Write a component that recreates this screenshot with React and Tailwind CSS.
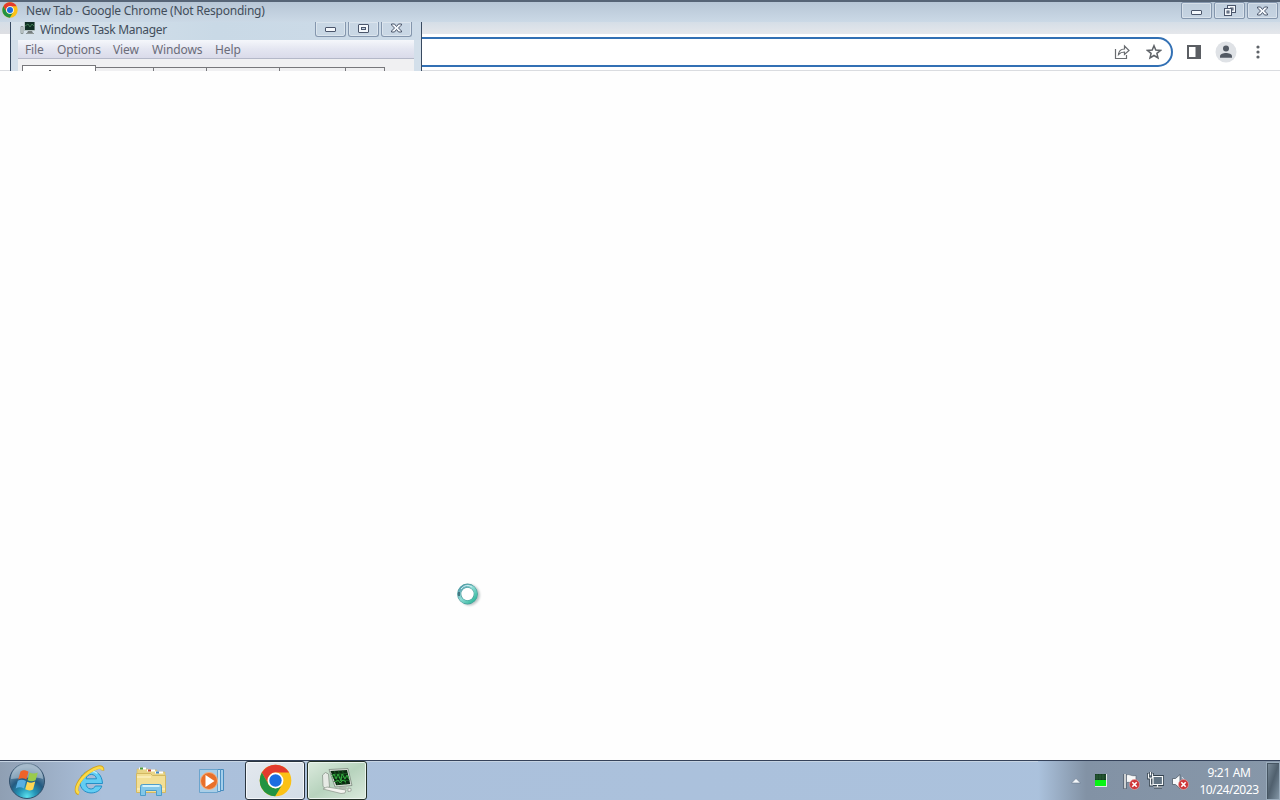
import clsx from "clsx";

const menuItems = [
  { label: "File", width: "w-[32px]" },
  { label: "Options", width: "w-[56px]" },
  { label: "View", width: "w-[39px]" },
  { label: "Windows", width: "w-[63px]" },
  { label: "Help", width: "w-[40px]" },
];

const tabs = ["w-[58px]", "w-[53px]", "w-[73px]", "w-[66px]", "w-[39px]"];

function ChromeLogo({ className }) {
  return (
    <svg viewBox="0 0 48 48" className={className}>
      <circle cx="24" cy="24" r="23" fill="#fbc116" />
      <path d="M4.1 12.5A23 23 0 0 1 43.9 12.5H24A11.5 11.5 0 0 0 14 29.7Z" fill="#e33b2e" />
      <path d="M4.1 12.5A23 23 0 0 0 23.5 47L33.9 29.7A11.5 11.5 0 0 1 14 29.7Z" fill="#229342" />
      <circle cx="24" cy="24" r="11.5" fill="#fff" />
      <circle cx="24" cy="24" r="9" fill="#1b6de0" />
    </svg>
  );
}

function CaptionGlyph({ type }) {
  return (
    <svg viewBox="0 0 14 12" className="h-3 w-3.5" fill="none" stroke="#4b566b">
      {type === "minimize" && <rect x="1.5" y="5.5" width="10" height="4" rx="0.5" fill="#f4f8fc" />}
      {type === "maximize" && (
        <>
          <rect x="1.5" y="2.5" width="10" height="8" rx="0.5" fill="#f4f8fc" />
          <rect x="4.5" y="5.5" width="4" height="2" fill="#c3d0e0" />
        </>
      )}
      {type === "restore" && (
        <>
          <rect x="4.5" y="0.5" width="8" height="7" fill="#f4f8fc" />
          <rect x="7.5" y="3" width="2.5" height="2" fill="#c3d0e0" />
          <rect x="1.5" y="3.5" width="7" height="7" fill="#f4f8fc" />
          <rect x="4" y="6" width="2" height="2" fill="#c3d0e0" />
        </>
      )}
      {type === "close" && (
        <path
          d="M1.5 2h3L6.5 4.5l2-2.5h3v1L8.5 6l3 3v1h-3l-2-2.5-2 2.5h-3v-1l3-3-3-3Z"
          fill="#f4f8fc"
        />
      )}
    </svg>
  );
}

function CaptionButton({ type, className }) {
  return (
    <div
      className={clsx(
        "flex justify-center border border-[#8496ad] bg-[#c5d3e2]/50 shadow-[inset_0_0_0_1px_rgba(255,255,255,0.35)]",
        className
      )}
    >
      <CaptionGlyph type={type} />
    </div>
  );
}

function TitleBar() {
  return (
    <div className="flex h-[22px] border-t-2 border-[#566476] bg-linear-to-b from-[#b7c6d6] to-[#cbd9e6]">
      <ChromeLogo className="ml-[2px] h-4 w-4" />
      <span className="ml-2 flex-1 text-[12px] leading-[18px] tracking-[-0.24px] text-[#424d5a]">
        New Tab - Google Chrome (Not Responding)
      </span>
      <div className="flex gap-[2px] pr-[2px]">
        <CaptionButton type="minimize" className="h-[17px] w-[31px] items-center rounded-[2px]" />
        <CaptionButton type="restore" className="h-[17px] w-[31px] items-center rounded-[2px]" />
        <CaptionButton type="close" className="h-[17px] w-[31px] items-center rounded-[2px]" />
      </div>
    </div>
  );
}

function MonitorIcon() {
  return (
    <svg viewBox="0 0 16 14" className="h-3.5 w-4">
      <path d="M1 4.5h2v7H1z" fill="#dfe6e8" stroke="#8d9898" />
      <path d="M4 0h11v9H4z" fill="#b7c4c4" />
      <path d="M5 0h9.500v8H5z" fill="#102e24" />
      <path d="m5 4 3-2 2 3 2-3 2 2" fill="none" stroke="#3d7850" />
      <path d="M8 9h4l1 2H7z" fill="#777f80" />
      <path d="M6 11h8v1H6z" fill="#8f9898" />
    </svg>
  );
}

function TaskManager() {
  return (
    <div className="flex h-[49px] w-[412px] flex-col overflow-hidden border-r border-l border-[#384a61] bg-[#d3dfea]">
      <div className="flex h-[18px] shrink-0 bg-linear-to-r from-[#d8e3ec] via-[#c9d9e6] to-[#cddbe8]">
        <span className="ml-[9px]">
          <MonitorIcon />
        </span>
        <span className="ml-1 flex-1 text-[12px] leading-[16px] tracking-[-0.3px] text-[#424e5c]">
          Windows Task Manager
        </span>
        <div className="flex gap-[2px] pr-[9px]">
          <CaptionButton type="minimize" className="h-[15px] w-[31px] rounded-b-[3px] border-t-0" />
          <CaptionButton type="maximize" className="h-[15px] w-[31px] rounded-b-[3px] border-t-0" />
          <CaptionButton type="close" className="h-[15px] w-[31px] rounded-b-[3px] border-t-0" />
        </div>
      </div>
      <div className="mx-[7px] flex h-[19px] shrink-0 border-b border-[#b4b8c8] bg-linear-to-b from-[#f5f7fb] via-[#e4e6f1] to-[#dadbea] pl-[7px] text-[12px] leading-[19px] tracking-[-0.12px] text-[#6b6c79]">
        {menuItems.map((item) => (
          <span key={item.label} className={item.width}>
            {item.label}
          </span>
        ))}
      </div>
      <div className="mx-[7px] flex h-[12px] items-end bg-[#f0f0f2] pl-1">
        <div className="flex h-[6px] w-[74px] items-end border border-b-0 border-[#77777b] bg-white pl-[26px]">
          <span className="h-px w-[2px] bg-[#555]" />
        </div>
        {tabs.map((width, index) => (
          <div key={index} className={clsx("h-[4px] border-t border-r border-[#77777b] bg-[#f0f0f2]", width)} />
        ))}
      </div>
    </div>
  );
}

function BrowserToolbar() {
  return (
    <div className="flex h-[49px] flex-1 flex-col border-b border-[#dadce0] bg-white">
      <div className="h-[12px] shrink-0 bg-linear-to-b from-[#d5dee7] to-[#e5e7eb]" />
      <div className="flex h-[36px] items-center">
        <div className="flex h-[30px] w-[751px] items-center justify-end gap-4 rounded-r-full border-2 border-l-0 border-[#3270b4] bg-white pr-[9px]">
          <svg viewBox="0 0 16 16" className="h-4 w-4" fill="none" stroke="#696c70" strokeWidth="1.2">
            <path d="M1.500 5v9.500h11V11" />
            <path d="M4.500 10.500c.4-3.700 2.500-5.400 6-5.500V2l4.500 4.500-4.500 4V8C7.500 8 6 8.800 4.500 10.500Z" />
          </svg>
          <svg viewBox="0 0 16 16" className="h-4 w-4" fill="none" stroke="#5f6368" strokeWidth="1.500">
            <path d="m8 1.700 1.800 4.300 4.700.4-3.600 3 1.100 4.600L8 11.500 4 14l1.100-4.600-3.600-3L6.200 6Z" />
          </svg>
        </div>
        <svg viewBox="0 0 14 14" className="ml-[14px] h-3.5 w-3.5">
          <path fillRule="evenodd" d="M0 0h14v14H0zM2 2v10h6.500V2z" fill="#5b5e63" />
        </svg>
        <svg viewBox="0 0 22 22" className="ml-[14px] h-[22px] w-[22px]">
          <circle cx="11" cy="11" r="10.5" fill="#dfe2e6" />
          <circle cx="11" cy="7.6" r="3" fill="#535a64" />
          <path d="M5 16.7v-1.4c0-2.1 3.4-3.2 6-3.2s6 1.1 6 3.2v1.4z" fill="#535a64" />
        </svg>
        <svg viewBox="0 0 4 14" className="ml-[19px] h-3.5 w-1" fill="#5f6368">
          <circle cx="2" cy="2" r="1.6" />
          <circle cx="2" cy="7" r="1.6" />
          <circle cx="2" cy="12" r="1.6" />
        </svg>
      </div>
    </div>
  );
}

function StartOrb() {
  return (
    <svg viewBox="0 0 38 38" className="h-[38px] w-[38px]">
      <defs>
        <radialGradient id="orb" cx="50%" cy="95%" r="85%">
          <stop offset="0" stopColor="#5ce2ee" />
          <stop offset="0.3" stopColor="#2596b8" />
          <stop offset="0.6" stopColor="#245a80" />
          <stop offset="1" stopColor="#7f9ab2" />
        </radialGradient>
      </defs>
      <circle cx="19" cy="19" r="17.5" fill="url(#orb)" stroke="#31506c" />
      <path d="M3 17a16 16 0 0 1 32 0c-8-3-20-1-32 0Z" fill="#d4e2ec" opacity=".45" />
      <path d="M12.500 9.500c3-2 5-1.400 8 .2L18.400 17.600c-3-1.800-5.500-1.600-8.200-.2Z" fill="#ee6328" />
      <path d="M21.600 10.500c2.700 1.400 5.400 1.200 8.200-.1l-2.200 7.800c-2.500 1.400-5.200 1.500-8 0Z" fill="#9acb4c" />
      <path d="M9.800 18.800c2.800-1.600 5.300-1.400 8.200.1l-2 7.700c-2.800-1.700-5.500-1.700-8.300-.1Z" fill="#5aafe1" />
      <path d="M19.200 19.700c2.700 1.400 5.300 1.400 8-.1l-2.100 7.800c-2.700 1.500-5.200 1.300-7.900-.1Z" fill="#ffd653" />
    </svg>
  );
}

function ExplorerLogo() {
  return (
    <svg viewBox="0 0 34 34" className="h-[34px] w-[34px]" fill="none">
      <path
        d="M29.500 19.500H13c.2 6.500 7.600 7 9.300 2.500h6.500C26 32 7.500 31.500 7 18.500 6.500 4 28.800 1.500 29.500 19.500ZM13 14.800h10.500c-.8-5.800-9.500-5.800-10.500 0Z"
        fill="#62cdf3"
        stroke="#258fc6"
      />
      <path d="M10 11c3.500-4 10-5 14.500-1.500" stroke="#b7effc" strokeWidth="1.5" />
      <path d="M6 29.500C-.5 27 6.500 14.500 15.500 8 22 3.300 30.500.5 29.500 6.500" stroke="#d4a51e" strokeWidth="3.6" />
      <path d="M6 29C0 26.500 6.800 15 16 8.300 22 4 30 1.300 29.200 6" stroke="#fbdb48" strokeWidth="2.5" />
    </svg>
  );
}

function FolderIcon() {
  return (
    <svg viewBox="0 0 34 32" className="h-8 w-[34px]">
      <path d="M3 4h11l1 1h8v2h8v4H3z" fill="#e9d586" stroke="#d3b861" strokeWidth=".6" />
      <path d="M5 2.500h7v2H5z" fill="#fff" />
      <path d="M6 2.500h3v2H6z" fill="#4d9a3c" />
      <path d="M13 4.500h8v2h-8z" fill="#fff" />
      <path d="M14 4.500h3v2h-3z" fill="#c0432f" />
      <path d="M21 6.500h8v2h-8z" fill="#fff" />
      <path d="M22 6.500h3v2h-3z" fill="#3f87c5" />
      <path d="M2.500 8.500h14l2 2h13v17h-29z" fill="#f2df96" stroke="#d3b861" />
      <path d="M3 12h14M3 24h28" stroke="#fbf0be" strokeWidth="1.5" />
      <path
        d="M6.500 30.500v-9q0-2 2-2h17q2 0 2 2v9h-5v-5h-11v5z"
        fill="#83c7e8"
        stroke="#4d9dca"
      />
      <path d="M8.500 21h17" stroke="#d3f2fa" strokeWidth="2" />
    </svg>
  );
}

function MediaIcon() {
  return (
    <svg viewBox="0 0 28 28" className="h-7 w-7">
      <path d="M8.500 2.500h17v21h-17z" fill="#a5cfeb" stroke="#478cbe" />
      <path d="M5.500 2.500h17v22h-17z" fill="#c6e2f2" stroke="#4d91c3" />
      <path d="M1.500 2.500h18v23h-18z" fill="#a9cee7" stroke="#6ba4cd" />
      <circle cx="11" cy="14" r="8.5" fill="#e8702a" stroke="#f3b486" />
      <path d="m7.500 8 9 6-9 6z" fill="#fff" />
    </svg>
  );
}

function TaskManagerIcon() {
  return (
    <svg viewBox="0 0 34 28" className="h-7 w-[34px]">
      <path d="m2.500 8 3-2.500 3 1.500 1 13-4 1.500-2.500-2z" fill="#e6eae5" stroke="#89978a" strokeWidth=".8" />
      <path d="m9 2.500 19-1 4 17-17 1.500z" fill="#d9dfd7" stroke="#7f8b80" strokeWidth=".8" />
      <path d="m10.500 4 16.500-1 3.200 14-14 1.300z" fill="#0b2a10" />
      <path d="m11.300 7.500 16.400-1M12.400 11l16.200-1M13.500 14.500l16-1.200M14.500 4l3.500 14M18.500 3.800 22 17.900M22.500 3.500 26 17.400" stroke="#1c6425" strokeWidth=".8" />
      <path d="m12 10 2-3 2 5 2-5 3 7 1-7 3 5 2-4 2 4M15 15l3-2 2 3 3-3 3 2" fill="none" stroke="#35ad40" />
      <path d="m19 20 7-.5 1 2.500-8 .5z" fill="#b4bcb1" />
      <path d="m3 22 4-2 19 3-1 3-4 .5zM28 21l3 .5v2.500l-3 .5z" fill="#f3f4ef" stroke="#8b948a" strokeWidth=".7" />
    </svg>
  );
}

function ErrorBadge() {
  return (
    <g>
      <circle cx="11.5" cy="11.5" r="5" fill="#cf3538" stroke="#e4a0a2" strokeWidth=".7" />
      <path d="m9.300 9.300 4.400 4.400m0-4.400-4.400 4.400" stroke="#fff" strokeWidth="1.600" />
    </g>
  );
}

function Tray() {
  return (
    <div className="flex h-full flex-1 items-center">
      <svg viewBox="0 0 10 6" className="ml-[33px] h-1.5 w-2.5">
        <path d="m5 .5 4.500 4.500H.5z" fill="#f4f8fb" stroke="#5c6e80" strokeWidth=".5" />
      </svg>
      <svg viewBox="0 0 12 13" className="ml-[14px] h-[13px] w-3">
        <path d="M0 0h12v13H0z" fill="#e3e9e8" />
        <path d="M0 0h11v7H0z" fill="#143d20" />
        <path d="M0 2h11M0 4h11M2 0v6m3-6v6m3-6v6" stroke="#347247" strokeWidth=".5" />
        <path d="M0 6h11v6H0z" fill="#08f414" />
      </svg>
      <svg viewBox="0 0 17 17" className="mt-px ml-[16px] h-[17px] w-[17px]">
        <path d="M2 1v15" stroke="#38434e" strokeWidth="3" />
        <path d="M2 1v14.500" stroke="#fff" strokeWidth="1.500" />
        <path d="M3.500 2c3-1.500 4 1.500 9.500.5v7c-4 1.500-6-1-9.500 0z" fill="#f7f8f8" stroke="#596675" strokeWidth=".7" />
        <ErrorBadge />
      </svg>
      <svg viewBox="0 0 17 17" className="ml-[7px] h-[17px] w-[17px]" fill="none">
        <path d="M6 4.500h9.500v8H6zM10.500 13v2M7 15h8M1.500 1v5h4V1M3.500 0v3M3.500 6v7H6" stroke="#33414d" strokeWidth="2.800" />
        <path d="M6 4.500h9.500v8H6z" fill="#617382" />
        <path d="M6 4.500h9.500v8H6zM10.500 13v2M7 15h8M1.500 1.500V6h4V1.500M3.500 0v3M3.500 6v7H6" stroke="#f5f8fa" strokeWidth="1.200" />
      </svg>
      <svg viewBox="0 0 17 17" className="mt-px ml-[8px] h-[17px] w-[17px]">
        <path d="M.5 5.500h3l4.500-4v14l-4.500-4h-3z" fill="#f8fafb" stroke="#4f5c68" strokeWidth=".8" />
        <path d="M10 4q2.500 2 2 5" fill="none" stroke="#dce5ea" />
        <ErrorBadge />
      </svg>
      <div className="ml-[3px] w-[74px] text-center text-[12px] leading-[17px] text-white">
        <div className="tracking-[-0.35px]">9:21 AM</div>
        <div className="tracking-[-0.48px]">10/24/2023</div>
      </div>
      <div className="ml-auto h-[38px] w-[14px] border border-[#9aacbc] bg-linear-to-br from-[#7f909e] via-[#50606e] to-[#8295a5] shadow-[inset_1px_1px_#465562]" />
    </div>
  );
}

function Taskbar() {
  return (
    <div className="flex h-10 items-center border-t border-[#35425a] bg-linear-to-r from-[#8f9fb3] from-0% via-[#abc0db] via-8% to-[#abc2dd] shadow-[inset_0_1px_#c6d4e3]">
      <div className="ml-2 flex w-[65px]">
        <StartOrb />
      </div>
      <div className="flex w-[61px]">
        <ExplorerLogo />
      </div>
      <div className="flex w-[64px]">
        <FolderIcon />
      </div>
      <div className="flex w-[47px]">
        <MediaIcon />
      </div>
      <div className="flex h-[39px] w-[60px] items-center justify-center rounded-[3px] border border-[#29343f] bg-linear-to-br from-[#e3e8ee] to-[#d3dde7] shadow-[inset_0_0_0_1px_#f4f7fa]">
        <ChromeLogo className="h-[33px] w-[33px]" />
      </div>
      <div className="ml-[2px] flex h-[39px] w-[60px] items-center justify-center rounded-[3px] border border-[#223026] bg-linear-to-br from-[#dceade] via-[#b7d3bd] to-[#dbeadd] shadow-[inset_0_0_0_1px_#ebf4ed]">
        <TaskManagerIcon />
      </div>
      <div className="ml-auto flex h-full w-[242px] bg-linear-to-r from-[#abc2dd] via-[#8292a5] via-20% to-[#8797a9]">
        <Tray />
      </div>
    </div>
  );
}

export default function App() {
  return (
    <div className="flex h-[800px] w-[1280px] flex-col overflow-hidden bg-[#fefefe] font-['Noto_Sans','Open_Sans',sans-serif]">
      <TitleBar />
      <div className="flex h-[49px]">
        <div className="w-[10px] border-b border-[#dadce0] bg-white">
          <div className="h-[12px] bg-linear-to-b from-[#d5dee7] to-[#dedfe3]" />
        </div>
        <TaskManager />
        <BrowserToolbar />
      </div>
      <main className="relative flex-1">
        {/* busy cursor */}
        <div className="absolute top-[512px] left-[456px]">
          <svg viewBox="0 0 26 24" className="h-6 w-[26px] drop-shadow-[2px_1px_1px_#bbc5c5]">
            <defs>
              <linearGradient id="busy" x1="0" y1="0" x2="1" y2="1">
                <stop stopColor="#4d93a8" />
                <stop offset=".45" stopColor="#8fdcd6" />
                <stop offset="1" stopColor="#25b393" />
              </linearGradient>
            </defs>
            <circle cx="11.5" cy="11" r="8.3" fill="#fff" stroke="#4a9c9c" strokeWidth="4.2" />
            <circle cx="11.5" cy="11" r="8.3" fill="none" stroke="url(#busy)" strokeWidth="3" />
            <path d="M5 6q5-6 11-2" fill="none" stroke="#d2eff2" strokeWidth="1" />
            <path d="M3 13V9" fill="none" stroke="#34606d" strokeWidth="1.5" />
          </svg>
        </div>
      </main>
      <Taskbar />
    </div>
  );
}
